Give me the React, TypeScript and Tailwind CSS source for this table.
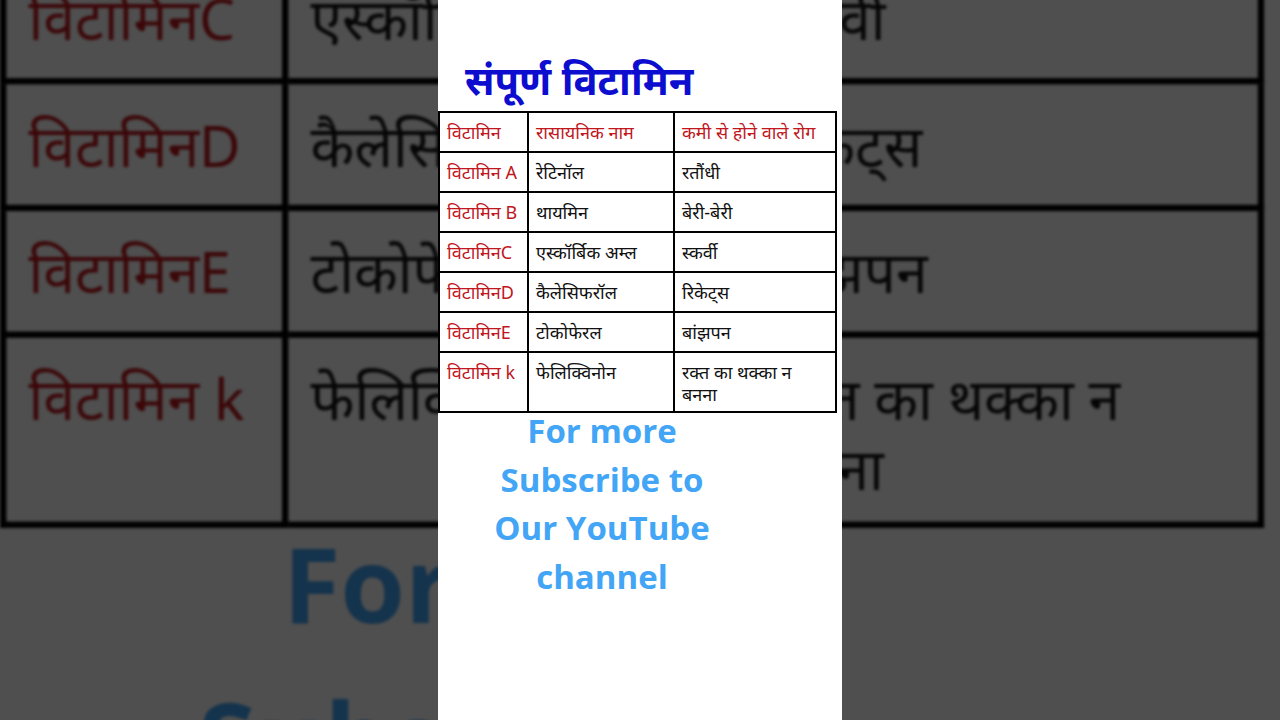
const rows = [
  { v: "विटामिन A", name: "रेटिनॉल", rog: "रतौंधी" },
  { v: "विटामिन B", name: "थायमिन", rog: "बेरी-बेरी" },
  { v: "विटामिनC", name: "एस्कॉर्बिक अम्ल", rog: "स्कर्वी" },
  { v: "विटामिनD", name: "कैलेसिफरॉल", rog: "रिकेट्स" },
  { v: "विटामिनE", name: "टोकोफेरल", rog: "बांझपन" },
  { v: "विटामिन k", name: "फेलिक्विनोन", rog: "रक्त का थक्का न बनना" },
];

function Panel() {
  return (
    <div className="w-[404px] h-[720px] bg-white flex flex-col font-['Noto_Sans',sans-serif]">
      <div className="h-[111px] pl-[27px] pt-[55px]">
        <h1 className="text-[40px] leading-[50px] font-bold text-[#0d0dcf] whitespace-nowrap">
          संपूर्ण विटामिन
        </h1>
      </div>

      <table className="w-[397px] border-collapse border-2 border-black text-[18px] leading-[22px] table-fixed">
        <colgroup>
          <col className="w-[89px]" />
          <col className="w-[146px]" />
          <col className="w-[162px]" />
        </colgroup>
        <tbody>
          <tr className="h-[40px] text-[#c0161c]">
            <td className="border-2 border-black align-top pt-[8px] px-[7px] whitespace-nowrap">विटामिन</td>
            <td className="border-2 border-black align-top pt-[8px] px-[7px] whitespace-nowrap">रासायनिक नाम</td>
            <td className="border-2 border-black align-top pt-[8px] px-[7px] whitespace-nowrap">कमी से होने वाले रोग</td>
          </tr>
          {rows.map((r, i) => (
            <tr key={r.v} className={i === rows.length - 1 ? "h-[60px]" : "h-[40px]"}>
              <td className="border-2 border-black align-top pt-[8px] px-[7px] text-[#c0161c] whitespace-nowrap">{r.v}</td>
              <td className="border-2 border-black align-top pt-[8px] px-[7px] text-[#111] whitespace-nowrap">{r.name}</td>
              <td className="border-2 border-black align-top pt-[8px] pl-[7px] pr-[24px] text-[#111]">{r.rog}</td>
            </tr>
          ))}
        </tbody>
      </table>

      {/* subscribe note */}
      <p className="w-[328px] -mt-[6px] text-center text-[33px] leading-[48.5px] font-bold text-[#42a5f5] font-['Open_Sans',sans-serif]">
        For more
        <br />
        Subscribe to
        <br />
        Our YouTube
        <br />
        channel
      </p>
    </div>
  );
}

export default function App() {
  return (
    <div className="relative w-[1280px] h-[720px] overflow-hidden bg-[#4f4f4f]">
      {/* blurred, darkened backdrop of the same frame */}
      <div className="absolute inset-0 flex items-center justify-center">
        <div className="scale-[3.168] brightness-[0.31] blur-[0.5px] shrink-0">
          <Panel />
        </div>
      </div>

      <div className="relative flex justify-center">
        <Panel />
      </div>
    </div>
  );
}
